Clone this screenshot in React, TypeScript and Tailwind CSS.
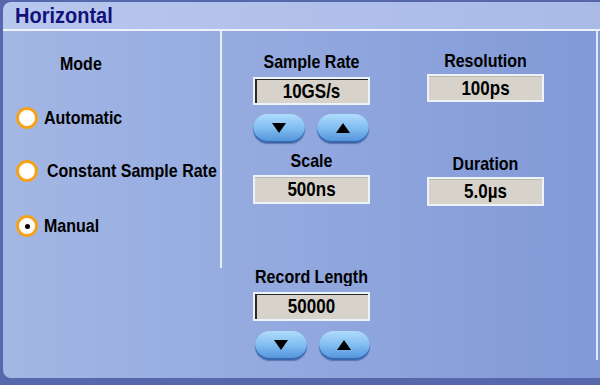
import React from 'react';

const Radio = ({ checked }: { checked?: boolean }) => (
  <div className="w-[22px] h-[22px] rounded-full border-[3px] border-[#f4a21c] bg-white flex items-center justify-center shrink-0">
    {checked && <div className="w-[5px] h-[5px] rounded-full bg-black" />}
  </div>
);

const ValueBox = ({ value, focused, h = 'h-[29px]' }: { value: string; focused?: boolean; h?: string }) => (
  <div
    className={`w-full ${h} border-2 border-[#eef2fb] bg-[#d7d3cb] flex items-center justify-center text-[17px] font-bold text-black leading-none ${
      focused ? 'shadow-[inset_2px_1px_0_#2a2a2a]' : 'shadow-[inset_0_1px_0_#bcb8b0]'
    }`}
  >
    <span className="inline-block scale-y-[1.15]">{value}</span>
  </div>
);

const Triangle = ({ up }: { up?: boolean }) => (
  <svg width="14" height="10" viewBox="0 0 14 10">
    {up ? <polygon points="7,0 14,10 0,10" fill="#000" /> : <polygon points="0,0 14,0 7,10" fill="#000" />}
  </svg>
);

const ArrowButton = ({ up }: { up?: boolean }) => (
  <button className="w-[52px] h-full rounded-full bg-gradient-to-b from-[#b0dcfc] via-[#7fbcf0] to-[#4f8fd8] shadow-[inset_0_-2px_0_#3867b0,0_1px_1px_rgba(40,60,120,0.5)] flex items-center justify-center">
    <Triangle up={up} />
  </button>
);

const Label = ({ children }: { children: React.ReactNode }) => (
  <div className="text-[16px] leading-[18px] font-bold text-black text-center whitespace-nowrap">
    <span className="inline-block scale-y-[1.12]">{children}</span>
  </div>
);

const Option = ({ text, checked, gap }: { text: string; checked?: boolean; gap: string }) => (
  <div className={`h-[24px] flex items-center ${gap}`}>
    <Radio checked={checked} />
    <span className="inline-block scale-y-[1.12] text-[16px] font-bold whitespace-nowrap">{text}</span>
  </div>
);

export default function App() {
  return (
    <div className="w-[600px] h-[385px] bg-[#5767ab] overflow-hidden font-['Liberation_Sans',Arial,sans-serif]">
      <div className="ml-[3px] mt-[2px] h-[376px] rounded-tl-[8px] rounded-bl-[8px] overflow-hidden flex flex-col">
        {/* Title bar */}
        <div className="h-[27px] shrink-0 bg-gradient-to-r from-[#b8c7ed] to-[#a9bae7] pl-[12px] text-[20px] leading-[27px] font-bold text-[#12117c]">
          <span className="inline-block scale-y-[1.08]">Horizontal</span>
        </div>
        <div className="h-[2px] shrink-0 bg-[#eef2fb]" />

        {/* Body */}
        <div className="flex-1 flex items-start bg-gradient-to-r from-[#a3b7e5] to-[#8199d7] pr-[2px]">
          {/* Mode column */}
          <div className="w-[219px] h-[237px] border-r-2 border-[#e8eef9] pt-[24px] shrink-0">
            <div className="pl-[57px] text-left">
              <div className="text-[16px] leading-[18px] font-bold">
                <span className="inline-block scale-y-[1.12]">Mode</span>
              </div>
            </div>
            <div className="pl-[13px] flex flex-col">
              <div className="mt-[33px]">
                <Option text="Automatic" gap="gap-[6px]" />
              </div>
              <div className="mt-[29px]">
                <Option text="Constant Sample Rate" gap="gap-[9px]" />
              </div>
              <div className="mt-[31px]">
                <Option text="Manual" checked gap="gap-[6px]" />
              </div>
            </div>
          </div>

          {/* Settings area */}
          <div className="flex-1 h-[329px] border-r-2 border-[#e2e9f7] flex pl-[31px] gap-[57px]">
            <div className="w-[117px] pt-[22px] flex flex-col">
              <Label>Sample Rate</Label>
              <div className="mt-[6px]">
                <ValueBox value="10GS/s" focused h="h-[28px]" />
              </div>
              <div className="mt-[9px] h-[31px] flex gap-[12px]">
                <ArrowButton />
                <ArrowButton up />
              </div>
              <div className="mt-[9px]">
                <Label>Scale</Label>
              </div>
              <div className="mt-[5px]">
                <ValueBox value="500ns" />
              </div>
              <div className="mt-[64px]">
                <Label>Record Length</Label>
              </div>
              <div className="mt-[6px]">
                <ValueBox value="50000" focused />
              </div>
              <div className="mt-[10px] h-[32px] flex gap-[12px] pl-[2px]">
                <ArrowButton />
                <ArrowButton up />
              </div>
            </div>

            <div className="w-[117px] pt-[21px] flex flex-col">
              <Label>Resolution</Label>
              <div className="mt-[4px]">
                <ValueBox value="100ps" h="h-[28px]" />
              </div>
              <div className="mt-[53px]">
                <Label>Duration</Label>
              </div>
              <div className="mt-[4px]">
                <ValueBox value="5.0µs" />
              </div>
            </div>
          </div>
        </div>
      </div>
    </div>
  );
}
